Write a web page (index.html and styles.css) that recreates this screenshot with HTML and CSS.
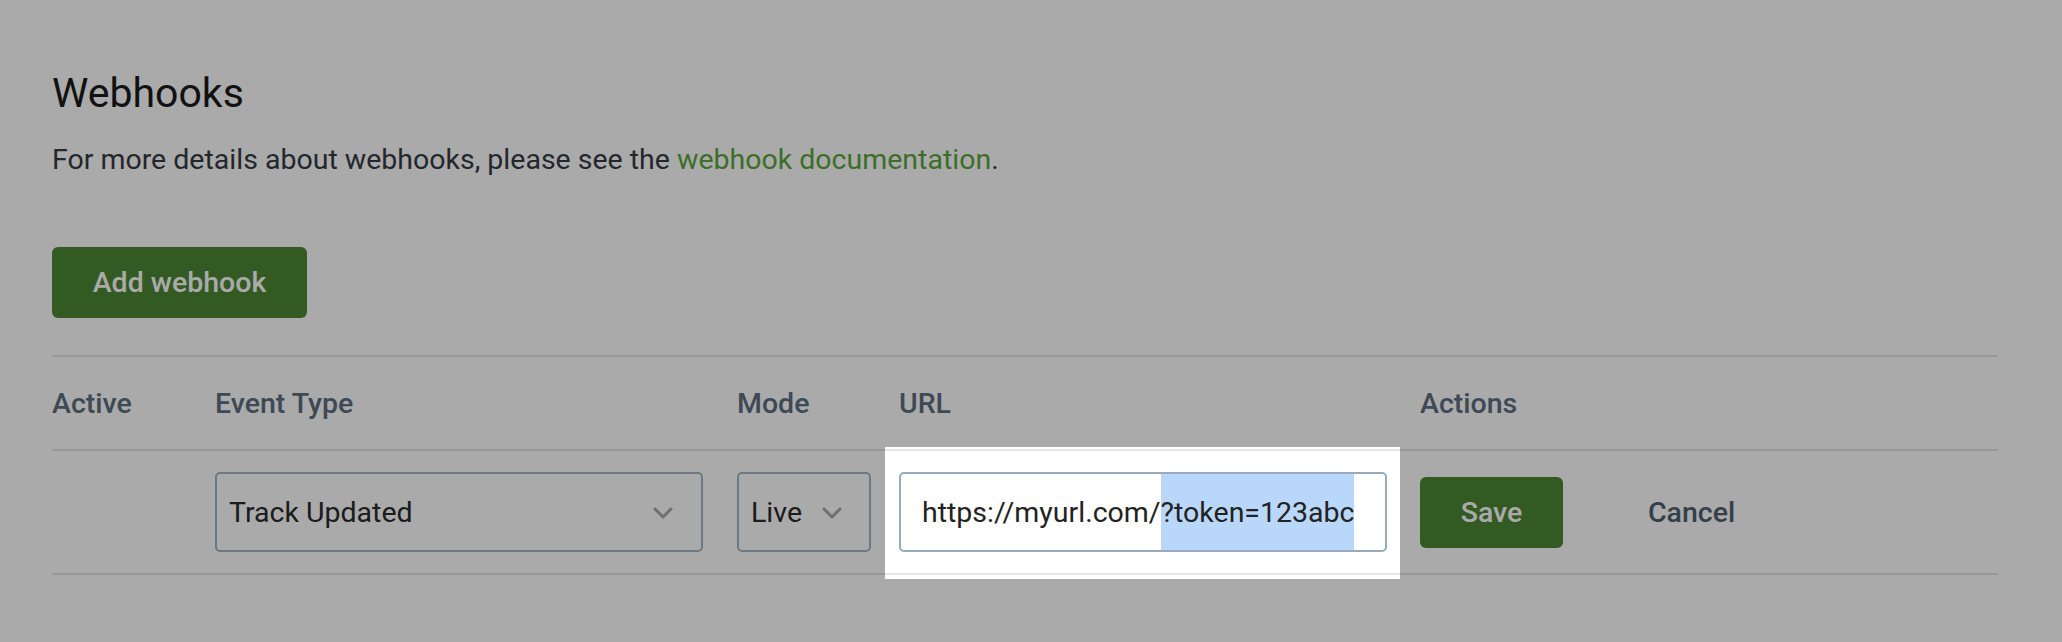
FILE: index.html
```html
<!DOCTYPE html>
<html lang="en">
<head>
<meta charset="utf-8">
<title>Webhooks</title>
<link rel="stylesheet" href="styles.css">
</head>
<body>
<main class="page">
  <h1 class="title">Webhooks</h1>
  <p class="desc">For more details about webhooks, please see the <a class="link" href="#">webhook documentation</a>.</p>
  <button class="btn btn-primary btn-add" type="button">Add webhook</button>

  <div class="table">
    <div class="row row-head">
      <div class="cell">Active</div>
      <div class="cell">Event Type</div>
      <div class="cell">Mode</div>
      <div class="cell">URL</div>
      <div class="cell">Actions</div>
    </div>
    <div class="row row-body">
      <div class="cell"></div>
      <div class="cell">
        <div class="select select-wide">
          <span class="select-value">Track Updated</span>
          <svg class="chev" width="20" height="12" viewBox="0 0 20 12"><polyline points="2,2 10,10 18,2" fill="none" stroke="#a8a8a8" stroke-width="3" stroke-linecap="round" stroke-linejoin="round"/></svg>
        </div>
      </div>
      <div class="cell">
        <div class="select select-narrow">
          <span class="select-value">Live</span>
          <svg class="chev" width="20" height="12" viewBox="0 0 20 12"><polyline points="2,2 10,10 18,2" fill="none" stroke="#a8a8a8" stroke-width="3" stroke-linecap="round" stroke-linejoin="round"/></svg>
        </div>
      </div>
      <div class="cell">
        <div class="url-wrap">
          <div class="input"><span class="txt">https://myurl.com/</span><span class="txt sel">?token=123abc</span></div>
          <div class="spotlight"></div>
        </div>
      </div>
      <div class="cell actions">
        <button class="btn btn-primary btn-save" type="button">Save</button>
        <button class="btn btn-link" type="button">Cancel</button>
      </div>
    </div>
  </div>
</main>
</body>
</html>
```

FILE: styles.css
```css
html, body {
  margin: 0;
  padding: 0;
  background: #ffffff;
  overflow: hidden;
}

body {
  font-family: Roboto, "Liberation Sans", Arial, sans-serif;
  color: #353b42;
  width: 2062px;
  height: 642px;
}

.page {
  padding: 0 64px 0 52px;
}

.title {
  margin: 69px 0 0 0;
  font-size: 41px;
  line-height: 48px;
  font-weight: 400;
  color: #1a1a1a;
}

.desc {
  margin: 25px 0 0 0;
  font-size: 28.5px;
  line-height: 36px;
  color: #353b42;
}

.link {
  color: #5ba53d;
  text-decoration: none;
}

.btn {
  font-family: Roboto, "Liberation Sans", Arial, sans-serif;
  font-weight: 500;
  font-size: 28.5px;
  border: none;
  cursor: pointer;
  display: inline-flex;
  align-items: center;
  justify-content: center;
}

.btn-primary {
  background: #4b8733;
  color: #ffffff;
  border-radius: 6px;
}

.btn-add {
  display: flex;
  margin-top: 69px;
  width: 255px;
  height: 71px;
}

.table {
  margin-top: 37px;
  border-top: 2px solid #e4e4e4;
}

.row {
  display: grid;
  grid-template-columns: 163px 522px 162px 521px 1fr;
  border-bottom: 2px solid #e4e4e4;
  align-items: center;
}

.row-head {
  height: 92px;
  font-size: 28.5px;
  font-weight: 500;
  color: #5c6e7e;
}

.row-body {
  height: 122px;
}

.cell {
  display: flex;
  align-items: center;
}

.select {
  box-sizing: border-box;
  height: 80px;
  border: 2px solid #a0b6c8;
  border-radius: 5px;
  display: flex;
  align-items: center;
  justify-content: space-between;
  padding: 0 28px 0 12px;
  font-size: 28.5px;
  color: #2a2a2a;
  background: #ffffff;
}

.select-wide {
  width: 488px;
}

.select-narrow {
  width: 134px;
  padding-right: 27px;
}

.chev {
  display: block;
  margin-top: 2px;
}

.url-wrap {
  position: relative;
}

.input {
  box-sizing: border-box;
  width: 488px;
  height: 80px;
  border: 2px solid #94acbe;
  border-radius: 5px;
  background: #ffffff;
  padding: 0 0 0 21px;
  display: flex;
  align-items: stretch;
  font-size: 28.5px;
  color: #222222;
}

.txt {
  display: flex;
  align-items: center;
}

.sel {
  background: #b9d7fb;
}

.spotlight {
  position: absolute;
  top: -25px;
  bottom: -27px;
  left: -14px;
  right: -13px;
  box-shadow: 0 0 0 3000px rgba(0, 0, 0, 0.333);
  z-index: 10;
  pointer-events: none;
}

.actions {
  gap: 85px;
}

.btn-save {
  width: 143px;
  height: 71px;
}

.btn-link {
  background: transparent;
  color: #4e606f;
  padding: 0;
}
```
